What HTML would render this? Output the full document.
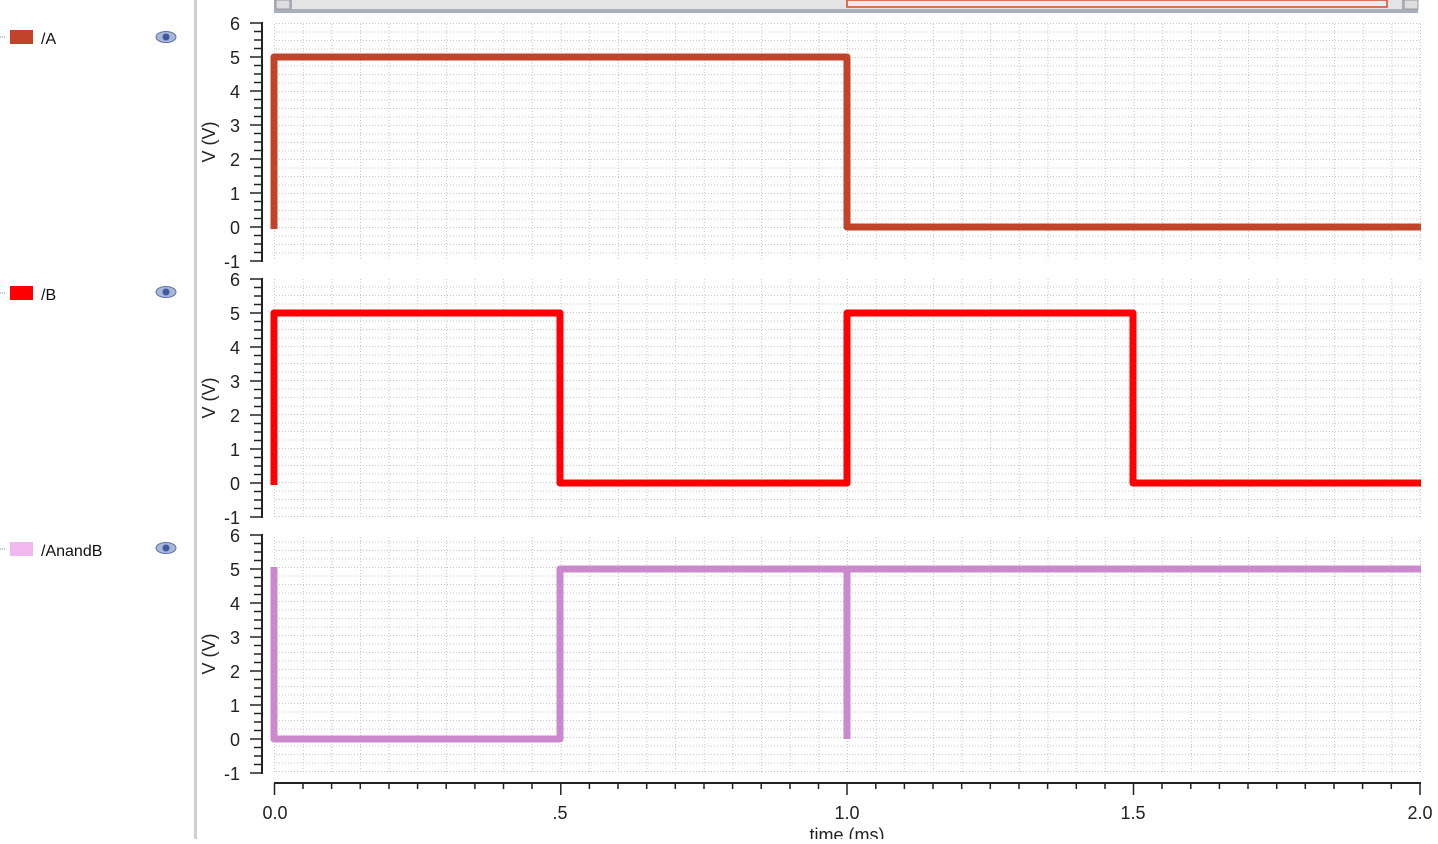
<!DOCTYPE html>
<html><head><style>
body{margin:0;background:#fff;width:1438px;height:839px;overflow:hidden;font-family:"Liberation Sans",sans-serif}
</style></head><body>
<svg width="1438" height="839" xmlns="http://www.w3.org/2000/svg" font-family="Liberation Sans, sans-serif">
<defs>
<pattern id="gv" x="274" y="0" width="28.65" height="839" patternUnits="userSpaceOnUse">
<line x1="0.5" y1="0" x2="0.5" y2="839" stroke="#c4c4c4" stroke-dasharray="1 2"/>
</pattern>
<pattern id="gh" x="0" y="23" width="1438" height="8.5" patternUnits="userSpaceOnUse">
<line x1="0" y1="0.5" x2="1438" y2="0.5" stroke="#c4c4c4" stroke-dasharray="1 2"/>
</pattern>
</defs>
<rect x="194" y="0" width="3" height="839" fill="#cfcfcf"/>
<rect x="274" y="0" width="1144" height="13" fill="#a9aebf"/>
<rect x="292" y="0" width="1110" height="9" fill="#e4e4e4"/>
<rect x="847" y="0" width="540" height="7" fill="#ececec" stroke="#d8492a" stroke-width="1.5"/>
<rect x="276" y="0" width="14" height="9" fill="#ddd" stroke="#999"/>
<rect x="1404" y="0" width="14" height="9" fill="#ddd" stroke="#999"/>
<g>
<rect x="274" y="23" width="1147" height="238" fill="url(#gv)"/><rect x="274" y="23" width="1147" height="238" fill="url(#gh)"/>
<rect x="274" y="279" width="1147" height="238" fill="url(#gv)"/><rect x="274" y="279" width="1147" height="238" fill="url(#gh)"/>
<rect x="274" y="535" width="1147" height="238" fill="url(#gv)"/><rect x="274" y="535" width="1147" height="238" fill="url(#gh)"/>
</g>
<g stroke="#222" stroke-width="2">
<line x1="262" y1="22" x2="262" y2="262"/>
<line x1="262" y1="278" x2="262" y2="518"/>
<line x1="262" y1="534" x2="262" y2="774"/>
</g>
<g stroke="#222" stroke-width="1.5">
<path d="M250 23h12M254 31.5h8M254 40h8M254 48.5h8M250 57h12M254 65.5h8M254 74h8M254 82.5h8M250 91h12M254 99.5h8M254 108h8M254 116.5h8M250 125h12M254 133.5h8M254 142h8M254 150.5h8M250 159h12M254 167.5h8M254 176h8M254 184.5h8M250 193h12M254 201.5h8M254 210h8M254 218.5h8M250 227h12M254 235.5h8M254 244h8M254 252.5h8M250 261h12"/>
<path transform="translate(0,256)" d="M250 23h12M254 31.5h8M254 40h8M254 48.5h8M250 57h12M254 65.5h8M254 74h8M254 82.5h8M250 91h12M254 99.5h8M254 108h8M254 116.5h8M250 125h12M254 133.5h8M254 142h8M254 150.5h8M250 159h12M254 167.5h8M254 176h8M254 184.5h8M250 193h12M254 201.5h8M254 210h8M254 218.5h8M250 227h12M254 235.5h8M254 244h8M254 252.5h8M250 261h12"/>
<path transform="translate(0,512)" d="M250 23h12M254 31.5h8M254 40h8M254 48.5h8M250 57h12M254 65.5h8M254 74h8M254 82.5h8M250 91h12M254 99.5h8M254 108h8M254 116.5h8M250 125h12M254 133.5h8M254 142h8M254 150.5h8M250 159h12M254 167.5h8M254 176h8M254 184.5h8M250 193h12M254 201.5h8M254 210h8M254 218.5h8M250 227h12M254 235.5h8M254 244h8M254 252.5h8M250 261h12"/>
</g>
<g font-size="18" fill="#222" text-anchor="end">
<text x="240" y="30">6</text><text x="240" y="64">5</text><text x="240" y="98">4</text><text x="240" y="132">3</text><text x="240" y="166">2</text><text x="240" y="200">1</text><text x="240" y="234">0</text><text x="240" y="268">-1</text>
<text x="240" y="286">6</text><text x="240" y="320">5</text><text x="240" y="354">4</text><text x="240" y="388">3</text><text x="240" y="422">2</text><text x="240" y="456">1</text><text x="240" y="490">0</text><text x="240" y="524">-1</text>
<text x="240" y="542">6</text><text x="240" y="576">5</text><text x="240" y="610">4</text><text x="240" y="644">3</text><text x="240" y="678">2</text><text x="240" y="712">1</text><text x="240" y="746">0</text><text x="240" y="780">-1</text>
</g>
<g font-size="18" fill="#222" text-anchor="middle">
<text transform="translate(215,142) rotate(-90)">V (V)</text>
<text transform="translate(215,398) rotate(-90)">V (V)</text>
<text transform="translate(215,654) rotate(-90)">V (V)</text>
</g>
<line x1="274" y1="783" x2="1421" y2="783" stroke="#222" stroke-width="2"/>
<path stroke="#222" stroke-width="1.5" d="M274.5 783v12M303 783v6M331.6 783v6M360.3 783v6M389 783v6M417.6 783v6M446.2 783v6M474.9 783v6M503.5 783v6M532 783v6M560.8 783v12M589.4 783v6M618 783v6M646.7 783v6M675.3 783v6M704 783v6M732.6 783v6M761.2 783v6M790 783v6M818.5 783v6M847 783v12M875.8 783v6M904.4 783v6M933 783v6M961.7 783v6M990.3 783v6M1019 783v6M1047.6 783v6M1076.3 783v6M1105 783v6M1133.5 783v12M1162 783v6M1190.8 783v6M1219.4 783v6M1248 783v6M1276.7 783v6M1305.3 783v6M1334 783v6M1362.6 783v6M1391.3 783v6M1420 783v12"/>
<g font-size="18" fill="#222" text-anchor="middle">
<text x="275" y="819">0.0</text><text x="560" y="819">.5</text><text x="847" y="819">1.0</text><text x="1133" y="819">1.5</text><text x="1420" y="819">2.0</text>
<text x="847" y="841">time (ms)</text>
</g>
<g fill="none" stroke-width="7" stroke-linejoin="round">
<path stroke="#c0432a" d="M274 229V57H847V227H1421"/>
<path stroke="#ff0000" d="M274 485V313H560V483H847V313H1133V483H1421"/>
<path stroke="#cc88cc" d="M274 567V739H560V569H1421M847 569V739"/>
</g>
<g font-size="16" fill="#111">
<path d="M0 37h6M0 293h6M0 549h6" stroke="#888" stroke-dasharray="1 1"/>
<rect x="10" y="30" width="23" height="14" fill="#c0432a"/><text x="41" y="44">/A</text>
<rect x="10" y="286" width="23" height="14" fill="#ff0000"/><text x="41" y="300">/B</text>
<rect x="10" y="542" width="23" height="14" fill="#f0b8ee"/><text x="41" y="556">/AnandB</text>
</g>
<g>
<g transform="translate(166,37)"><ellipse rx="10" ry="5.5" fill="#a9b6d6" stroke="#5b73b0"/><circle r="3.5" fill="#3c5a9e"/></g>
<g transform="translate(166,292)"><ellipse rx="10" ry="5.5" fill="#a9b6d6" stroke="#5b73b0"/><circle r="3.5" fill="#3c5a9e"/></g>
<g transform="translate(166,548)"><ellipse rx="10" ry="5.5" fill="#a9b6d6" stroke="#5b73b0"/><circle r="3.5" fill="#3c5a9e"/></g>
</g>
</svg>
</body></html>
